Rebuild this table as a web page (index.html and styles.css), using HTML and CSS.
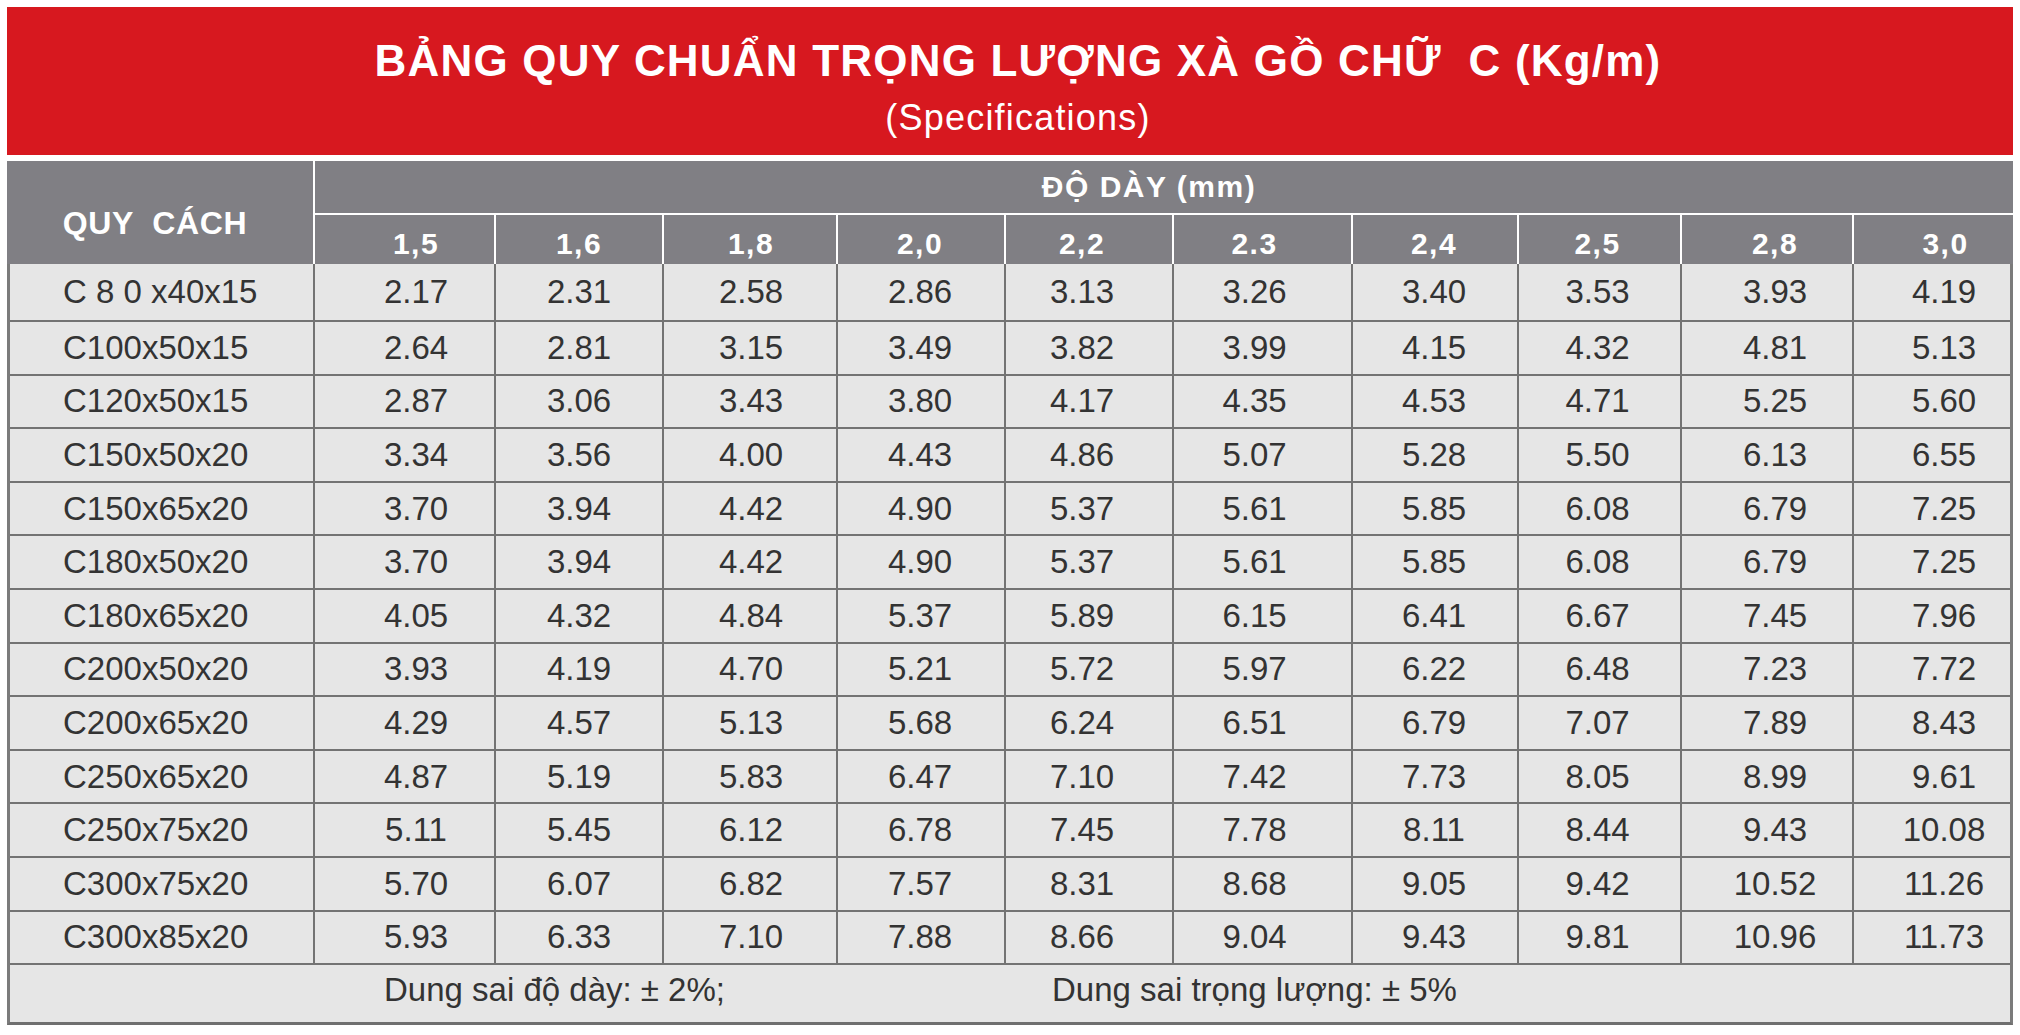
FILE: index.html
```html
<!DOCTYPE html>
<html lang="vi">
<head>
<meta charset="utf-8">
<title>Bảng quy chuẩn trọng lượng xà gồ chữ C</title>
<link rel="stylesheet" href="styles.css">
</head>
<body>
<div class="sheet">
  <header class="banner">
    <h1 class="title">BẢNG QUY CHUẨN TRỌNG LƯỢNG XÀ GỒ CHỮ  C (Kg/m)</h1>
    <p class="subtitle">(Specifications)</p>
  </header>

  <div class="head">
    <div class="h-spec">QUY  CÁCH</div>
    <div class="h-thick">ĐỘ DÀY (mm)</div>
    <div class="h-num">1,5</div>
    <div class="h-num">1,6</div>
    <div class="h-num">1,8</div>
    <div class="h-num">2,0</div>
    <div class="h-num">2,2</div>
    <div class="h-num">2.3</div>
    <div class="h-num">2,4</div>
    <div class="h-num">2,5</div>
    <div class="h-num">2,8</div>
    <div class="h-num">3,0</div>
  </div>

  <div class="body">
    <div class="row first"><div>C 8 0 x40x15</div><div>2.17</div><div>2.31</div><div>2.58</div><div>2.86</div><div>3.13</div><div>3.26</div><div>3.40</div><div>3.53</div><div>3.93</div><div>4.19</div></div>
    <div class="row"><div>C100x50x15</div><div>2.64</div><div>2.81</div><div>3.15</div><div>3.49</div><div>3.82</div><div>3.99</div><div>4.15</div><div>4.32</div><div>4.81</div><div>5.13</div></div>
    <div class="row"><div>C120x50x15</div><div>2.87</div><div>3.06</div><div>3.43</div><div>3.80</div><div>4.17</div><div>4.35</div><div>4.53</div><div>4.71</div><div>5.25</div><div>5.60</div></div>
    <div class="row"><div>C150x50x20</div><div>3.34</div><div>3.56</div><div>4.00</div><div>4.43</div><div>4.86</div><div>5.07</div><div>5.28</div><div>5.50</div><div>6.13</div><div>6.55</div></div>
    <div class="row"><div>C150x65x20</div><div>3.70</div><div>3.94</div><div>4.42</div><div>4.90</div><div>5.37</div><div>5.61</div><div>5.85</div><div>6.08</div><div>6.79</div><div>7.25</div></div>
    <div class="row"><div>C180x50x20</div><div>3.70</div><div>3.94</div><div>4.42</div><div>4.90</div><div>5.37</div><div>5.61</div><div>5.85</div><div>6.08</div><div>6.79</div><div>7.25</div></div>
    <div class="row"><div>C180x65x20</div><div>4.05</div><div>4.32</div><div>4.84</div><div>5.37</div><div>5.89</div><div>6.15</div><div>6.41</div><div>6.67</div><div>7.45</div><div>7.96</div></div>
    <div class="row"><div>C200x50x20</div><div>3.93</div><div>4.19</div><div>4.70</div><div>5.21</div><div>5.72</div><div>5.97</div><div>6.22</div><div>6.48</div><div>7.23</div><div>7.72</div></div>
    <div class="row"><div>C200x65x20</div><div>4.29</div><div>4.57</div><div>5.13</div><div>5.68</div><div>6.24</div><div>6.51</div><div>6.79</div><div>7.07</div><div>7.89</div><div>8.43</div></div>
    <div class="row"><div>C250x65x20</div><div>4.87</div><div>5.19</div><div>5.83</div><div>6.47</div><div>7.10</div><div>7.42</div><div>7.73</div><div>8.05</div><div>8.99</div><div>9.61</div></div>
    <div class="row"><div>C250x75x20</div><div>5.11</div><div>5.45</div><div>6.12</div><div>6.78</div><div>7.45</div><div>7.78</div><div>8.11</div><div>8.44</div><div>9.43</div><div>10.08</div></div>
    <div class="row"><div>C300x75x20</div><div>5.70</div><div>6.07</div><div>6.82</div><div>7.57</div><div>8.31</div><div>8.68</div><div>9.05</div><div>9.42</div><div>10.52</div><div>11.26</div></div>
    <div class="row"><div>C300x85x20</div><div>5.93</div><div>6.33</div><div>7.10</div><div>7.88</div><div>8.66</div><div>9.04</div><div>9.43</div><div>9.81</div><div>10.96</div><div>11.73</div></div>
    <div class="foot">
      <span class="tol-a">Dung sai độ dày: ± 2%;</span>
      <span class="tol-b">Dung sai trọng lượng: ± 5%</span>
    </div>
  </div>
</div>
</body>
</html>
```

FILE: styles.css
```css
* { box-sizing: border-box; }

html, body {
  margin: 0;
  padding: 0;
  background: #ffffff;
}

body {
  font-family: "Liberation Sans", Arial, sans-serif;
}

.sheet {
  width: 2006px;
  margin-left: 7px;
  padding-top: 7px;
}

/* ---------- red banner ---------- */
.banner {
  height: 148px;
  background: #d7181f;
  color: #ffffff;
  display: flex;
  flex-direction: column;
  align-items: center;
  padding-top: 32px;
  padding-left: 16px;
}

.title {
  margin: 0;
  font-size: 44px;
  line-height: 44px;
  font-weight: 700;
  letter-spacing: 1.2px;
  white-space: pre;
}

.subtitle {
  margin: 17px 0 0;
  font-size: 36px;
  line-height: 36px;
  font-weight: 400;
  letter-spacing: 1.2px;
}

/* ---------- shared column grid ---------- */
.head,
.row {
  display: grid;
  grid-template-columns: 306px 181px 168px 174px 168px 168px 179px 166px 163px 172px 161px;
}

/* ---------- gray header ---------- */
.head {
  margin-top: 6px;
  background: #807f84;
  color: #ffffff;
  font-weight: 700;
  grid-template-rows: 54px 49px;
}

.h-spec {
  grid-column: 1;
  grid-row: 1 / 3;
  display: flex;
  align-items: center;
  justify-content: center;
  padding-top: 22px;
  padding-right: 10px;
  font-size: 32px;
  letter-spacing: 0.6px;
  white-space: pre;
}

.h-thick {
  grid-column: 2 / 12;
  grid-row: 1;
  border-left: 2px solid #ffffff;
  border-bottom: 2px solid #ffffff;
  display: flex;
  align-items: center;
  justify-content: center;
  padding-right: 30px;
  font-size: 30px;
  letter-spacing: 1.5px;
}

.h-num {
  grid-row: 2;
  border-left: 2px solid #ffffff;
  display: flex;
  align-items: center;
  justify-content: center;
  padding-top: 8px;
  font-size: 30px;
  letter-spacing: 1.5px;
}

/* ---------- data rows ---------- */
.body {
  background: #e6e6e6;
  border-left: 3px solid #7b7b7b;
  border-right: 3px solid #7b7b7b;
  border-bottom: 3px solid #6f6f6f;
  color: #333333;
  font-size: 33px;
}

.body .row {
  grid-template-columns: 303px 181px 168px 174px 168px 168px 179px 166px 163px 172px 158px;
  height: 53.6px;
  border-bottom: 2px solid #737373;
}

.body .row.first {
  height: 58px;
}

.row > div {
  display: flex;
  align-items: center;
  justify-content: center;
  border-left: 2px solid #737373;
}

.row > div:first-child {
  border-left: none;
  justify-content: flex-start;
  padding-left: 53px;
}

/* per-column horizontal placement of centred values */
.row > div:nth-child(2),  .h-num:nth-child(3)  { padding-left: 23px; }
.row > div:nth-child(4),  .h-num:nth-child(5)  { padding-left: 2px; }
.row > div:nth-child(5),  .h-num:nth-child(6)  { padding-right: 2px; }
.row > div:nth-child(6),  .h-num:nth-child(7)  { padding-right: 14px; }
.row > div:nth-child(7),  .h-num:nth-child(8)  { padding-right: 16px; }
.row > div:nth-child(8),  .h-num:nth-child(9)  { padding-right: 2px; }
.row > div:nth-child(9),  .h-num:nth-child(10) { padding-right: 4px; }
.row > div:nth-child(10), .h-num:nth-child(11) { padding-left: 16px; }
.row > div:nth-child(11), .h-num:nth-child(12) { padding-left: 24px; }

/* ---------- footer ---------- */
.foot {
  height: 57px;
  display: flex;
  align-items: center;
  padding-left: 374px;
  padding-bottom: 8px;
  font-size: 33px;
}

.tol-a {
  width: 668px;
  white-space: pre;
}

.tol-b {
  white-space: pre;
}
```
